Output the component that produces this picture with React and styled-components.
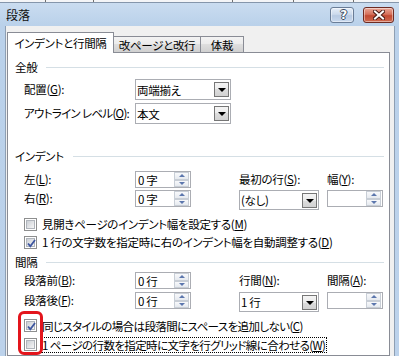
import React from 'react';
import styled, { createGlobalStyle } from 'styled-components';

const GlobalStyle = createGlobalStyle`
  html, body {
    margin: 0;
    padding: 0;
    overflow: hidden;
    background: #fff;
  }
  body {
    font-family: "Noto Sans CJK JP", "Liberation Sans", sans-serif;
    font-size: 11.5px;
    letter-spacing: -0.3px;
    color: #000;
    font-feature-settings: "palt";
  }
`;

const Screen = styled.div`
  position: relative;
  width: 399px;
  height: 356px;
  overflow: hidden;
  display: flex;
  flex-direction: column;
`;

/* window behind the dialog, only its bottom edge shows */
const BackStrip = styled.div`
  height: 3px;
  box-sizing: border-box;
  display: flex;
  background: #f4f5f7;
  border-bottom: 1px solid #8596ab;
`;

const StripCell = styled.div`
  box-sizing: border-box;
  width: ${p => p.$w}px;
  border-right: 1px solid #6f6f6f;
`;

const Dialog = styled.div`
  flex: 1;
  display: flex;
  flex-direction: column;
  background: linear-gradient(#cadcf0 0px, #bad1ea 22px, #bcd2eb 100%);
`;

const TitleBar = styled.div`
  height: 23px;
  display: flex;
  align-items: flex-start;
  padding: 0 5px 0 6px;
`;

const Title = styled.div`
  flex: 1;
  margin-top: 5px;
  font-size: 12px;
  letter-spacing: 0;
  line-height: 14px;
  color: #111;
`;

const CaptionButton = styled.div`
  box-sizing: border-box;
  width: ${p => p.$w}px;
  height: 16px;
  margin-top: 4px;
  margin-left: ${p => p.$ml || 0}px;
  border-radius: 3px;
  border: 1px solid ${p => (p.$close ? '#6e2b22' : '#6a7d97')};
  background: ${p =>
    p.$close
      ? 'linear-gradient(#e9a797, #d6715c 45%, #c24a33 55%, #cf6a4f)'
      : 'linear-gradient(#e6eef8, #ccdaec 45%, #b7cae2 55%, #c9d9ee)'};
  box-shadow: inset 0 0 0 1px rgba(255, 255, 255, 0.45);
  display: flex;
  align-items: center;
  justify-content: center;
`;

const HelpGlyph = styled.span`
  font-family: "DejaVu Sans", sans-serif;
  font-weight: bold;
  font-size: 12px;
  line-height: 12px;
  color: #fff;
  padding-left: 3px;
  text-shadow: 1px 0 0 #3b4a5e, -1px 0 0 #3b4a5e, 0 1px 0 #3b4a5e, 0 -1px 0 #3b4a5e;
`;

const Client = styled.div`
  flex: 1;
  display: flex;
  flex-direction: column;
  margin: 0 4px 0 5px;
  padding: 6px 4px 0 1px;
  background: #f0f0f0;
  border-left: 1px solid #8e9fb3;
  border-right: 1px solid #8e9fb3;
`;

const TabRow = styled.div`
  position: relative;
  z-index: 1;
  display: flex;
  align-items: flex-end;
  height: 21px;
  margin-bottom: -1px;
`;

const Tab = styled.div`
  box-sizing: border-box;
  position: relative;
  z-index: ${p => (p.$active ? 2 : 1)};
  width: ${p => p.$w}px;
  height: ${p => (p.$active ? 21 : 16)}px;
  margin-bottom: ${p => (p.$active ? 0 : 1)}px;
  margin-left: ${p => (p.$first ? 0 : -1)}px;
  border: 1px solid #898c95;
  border-bottom: none;
  background: ${p =>
    p.$active ? '#fff' : 'linear-gradient(#f3f3f3, #ebebeb 50%, #dedede 50%, #d0d0d0)'};
  display: flex;
  align-items: center;
  justify-content: center;
  line-height: 14px;
  white-space: nowrap;
`;

const Panel = styled.div`
  flex: 1;
  background: #fff;
  border: 1px solid #898c95;
  padding: 7px 5px 0 7px;
`;

const GroupHead = styled.div`
  display: flex;
  align-items: center;
  gap: 9px;
  height: 14px;
  line-height: 14px;
  margin-top: ${p => p.$mt || 0}px;
  &::after {
    content: "";
    flex: 1;
    height: 1px;
    background: #d5dfe5;
  }
`;

const FieldGrid = styled.div`
  display: grid;
  grid-template-columns: ${p => p.$cols};
  grid-template-rows: ${p => p.$rows};
  row-gap: ${p => p.$gap}px;
  align-items: start;
  margin: ${p => p.$mt}px 0 0 9px;
`;

const Label = styled.div`
  line-height: ${p => p.$lh || 17}px;
  letter-spacing: ${p => (p.$tight ? '-0.7px' : 'inherit')};
  white-space: nowrap;
`;

const Select = styled.div`
  box-sizing: border-box;
  width: ${p => p.$w}px;
  height: ${p => p.$h}px;
  border: 1px solid #abadb3;
  background: #fff;
  display: flex;
  align-items: center;
  padding: 0 1px 0 1px;
`;

const SelectText = styled.span`
  flex: 1;
  line-height: 14px;
  white-space: nowrap;
`;

const DropButton = styled.div`
  box-sizing: border-box;
  width: 15px;
  height: 15px;
  border: 1px solid #767676;
  background: linear-gradient(#f4f4f4, #ebebeb 50%, #dddddd 50%, #d2d2d2);
  display: flex;
  align-items: center;
  justify-content: center;
  &::before {
    content: "";
    border-left: 4px solid transparent;
    border-right: 4px solid transparent;
    border-top: 4px solid #000;
    margin-top: 1px;
  }
`;

const SpinBox = styled.div`
  box-sizing: border-box;
  width: 56px;
  height: 17px;
  border: 1px solid #abadb3;
  background: #fff;
  display: flex;
  align-items: center;
  padding: 0 1px 0 2px;
`;

const SpinButtons = styled.div`
  display: flex;
  flex-direction: column;
  width: 15px;
  height: 15px;
`;

const SpinButton = styled.div`
  box-sizing: border-box;
  flex: 1;
  border: 1px solid #c8ced6;
  background: linear-gradient(#f8f9fb, #e6eaef);
  display: flex;
  align-items: center;
  justify-content: center;
  &::before {
    content: "";
    border-left: 3px solid transparent;
    border-right: 3px solid transparent;
    ${p => (p.$up ? 'border-bottom: 3px solid #5c77ad;' : 'border-top: 3px solid #5c77ad;')}
  }
`;

const CheckRow = styled.div`
  display: flex;
  align-items: center;
  gap: 5px;
  height: ${p => p.$h}px;
  margin-left: 9px;
  margin-top: ${p => p.$mt || 0}px;
  white-space: nowrap;
`;

const Box = styled.div`
  box-sizing: border-box;
  width: 13px;
  height: 13px;
  flex: none;
  border: 1px solid #8e8f8f;
  background: #fff;
  padding: 1px;
  position: relative;
`;

const BoxFill = styled.div`
  width: 100%;
  height: 100%;
  background: linear-gradient(135deg, #cbcfd5, #f6f6f6);
  border: 1px solid #b0b5bc;
  box-sizing: border-box;
`;

const CheckMark = styled.svg`
  position: absolute;
  left: 1px;
  top: 1px;
`;

const CheckText = styled.span`
  line-height: 14px;
  box-sizing: border-box;
  border: 1px dotted ${p => (p.$focus ? '#000' : 'transparent')};
  margin-left: -1px;
  padding-right: 1px;
  letter-spacing: ${p => (p.$tight ? '-0.6px' : 'inherit')};
`;

const Highlight = styled.div`
  position: absolute;
  left: 18px;
  top: 311px;
  width: 25px;
  height: 44px;
  box-sizing: border-box;
  border: 3px solid #e3151c;
  border-radius: 6px;
`;

const Spin = ({ value }) => (
  <SpinBox>
    <SelectText>{value}</SelectText>
    <SpinButtons>
      <SpinButton $up />
      <SpinButton />
    </SpinButtons>
  </SpinBox>
);

const Combo = ({ value, w, h }) => (
  <Select $w={w} $h={h}>
    <SelectText>{value}</SelectText>
    <DropButton />
  </Select>
);

const Check = ({ checked, focus, tight, h, mt, children }) => (
  <CheckRow $h={h} $mt={mt}>
    <Box>
      <BoxFill />
      {checked && (
        <CheckMark width="11" height="11" viewBox="0 0 11 11">
          <path d="M2 5.5 L4.3 8.2 L9 2" fill="none" stroke="#3d56a0" strokeWidth="1.8" />
        </CheckMark>
      )}
    </Box>
    <CheckText $focus={focus} $tight={tight}>{children}</CheckText>
  </CheckRow>
);

const CloseIcon = () => (
  <svg width="12" height="10" viewBox="0 0 12 10">
    <path d="M2 1.5 L10 8.5 M10 1.5 L2 8.5" stroke="#4a1c16" strokeWidth="4" strokeLinecap="square" />
    <path d="M2 1.5 L10 8.5 M10 1.5 L2 8.5" stroke="#fff" strokeWidth="2" strokeLinecap="square" />
  </svg>
);

export default function App() {
  return (
    <Screen>
      <GlobalStyle />
      <BackStrip>
        <StripCell $w={46} />
        <StripCell $w={48} />
        <StripCell $w={139} />
        <StripCell $w={61} />
        <StripCell $w={60} />
      </BackStrip>
      <Dialog>
        <TitleBar>
          <Title>段落</Title>
          <CaptionButton $w={24}>
            <HelpGlyph>?</HelpGlyph>
          </CaptionButton>
          <CaptionButton $w={31} $ml={9} $close>
            <CloseIcon />
          </CaptionButton>
        </TitleBar>
        <Client>
          <TabRow>
            <Tab $w={107} $first $active>インデントと行間隔</Tab>
            <Tab $w={88}>改ページと改行</Tab>
            <Tab $w={44}>体裁</Tab>
          </TabRow>
          <Panel>
            <GroupHead>全般</GroupHead>
            <FieldGrid $cols="111px 96px" $rows="21px 21px" $gap={3} $mt={5}>
              <Label $lh={21}>配置(<u>G</u>):</Label>
              <Combo value="両端揃え" w={96} h={21} />
              <Label $lh={21} $tight>アウトライン レベル(<u>O</u>):</Label>
              <Combo value="本文" w={96} h={21} />
            </FieldGrid>

            <GroupHead $mt={25}>インデント</GroupHead>
            <FieldGrid $cols="111px 104px 88px 56px" $rows="17px 20px" $gap={2} $mt={8}>
              <Label>左(<u>L</u>):</Label>
              <Spin value="0 字" />
              <Label>最初の行(<u>S</u>):</Label>
              <Label>幅(<u>Y</u>):</Label>
              <Label>右(<u>R</u>):</Label>
              <Spin value="0 字" />
              <Combo value="(なし)" w={80} h={20} />
              <Spin value="" />
            </FieldGrid>
            <Check h={18} mt={5}>見開きページのインデント幅を設定する(<u>M</u>)</Check>
            <Check h={18} checked>1 行の文字数を指定時に右のインデント幅を自動調整する(<u>D</u>)</Check>

            <GroupHead $mt={4}>間隔</GroupHead>
            <FieldGrid $cols="111px 104px 88px 56px" $rows="17px 20px" $gap={3} $mt={3}>
              <Label>段落前(<u>B</u>):</Label>
              <Spin value="0 行" />
              <Label>行間(<u>N</u>):</Label>
              <Label>間隔(<u>A</u>):</Label>
              <Label>段落後(<u>F</u>):</Label>
              <Spin value="0 行" />
              <Combo value="1 行" w={80} h={20} />
              <Spin value="" />
            </FieldGrid>
            <Check h={19} mt={4} checked tight>同じスタイルの場合は段落間にスペースを追加しない(<u>C</u>)</Check>
            <Check h={19} focus tight>1 ページの行数を指定時に文字を行グリッド線に合わせる(<u>W</u>)</Check>
          </Panel>
        </Client>
      </Dialog>
      <Highlight />
    </Screen>
  );
}
